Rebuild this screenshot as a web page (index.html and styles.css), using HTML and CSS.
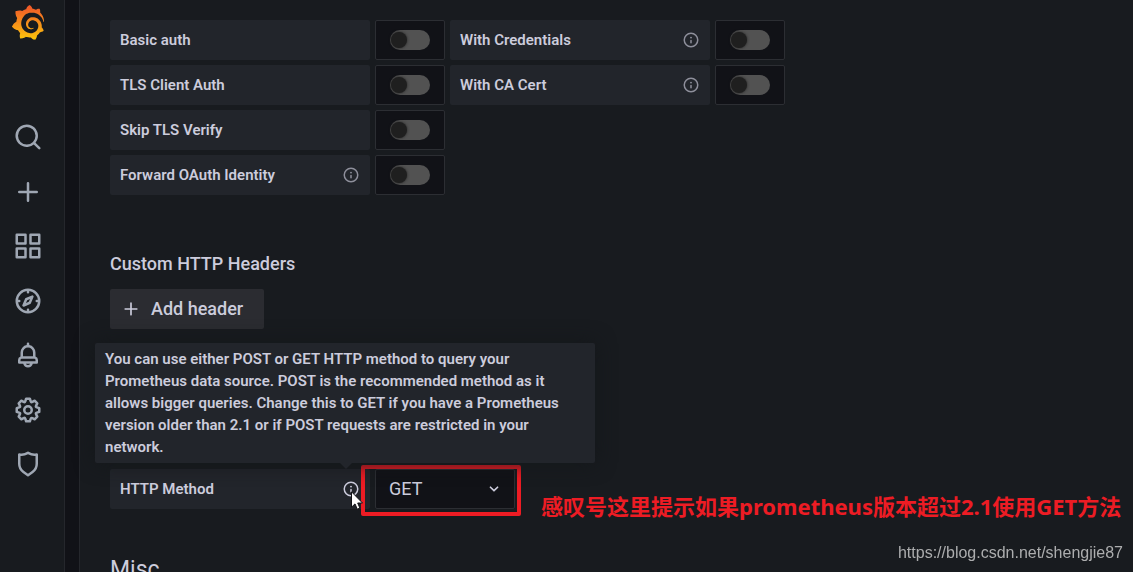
FILE: index.html
```html
<!DOCTYPE html>
<html lang="en">
<head>
<meta charset="utf-8">
<title>Prometheus data source settings</title>
<link rel="stylesheet" href="styles.css">
</head>
<body>
<svg class="defs" aria-hidden="true">
  <symbol id="info" viewBox="0 0 24 24"><path d="M12,2A10,10,0,1,0,22,12,10,10,0,0,0,12,2Zm0,18a8,8,0,1,1,8-8A8,8,0,0,1,12,20Zm0-8.5a1,1,0,0,0-1,1v3a1,1,0,0,0,2,0v-3A1,1,0,0,0,12,11.5Zm0-4a1.25,1.25,0,1,0,1.25,1.25A1.25,1.25,0,0,0,12,7.5Z"/></symbol>
  <symbol id="plus" viewBox="0 0 24 24"><path d="M19,11H13V5a1,1,0,0,0-2,0v6H5a1,1,0,0,0,0,2h6v6a1,1,0,0,0,2,0V13h6a1,1,0,0,0,0-2Z"/></symbol>
</svg>
<div class="app">
  <nav class="sidebar" aria-label="Main">
    <a class="logo" href="#" aria-label="Home">
      <svg viewBox="0 0 351 365"><defs><linearGradient id="flame" gradientUnits="userSpaceOnUse" x1="175" y1="365" x2="175" y2="20"><stop offset="0" stop-color="#fcc60b"/><stop offset="1" stop-color="#f05a28"/></linearGradient></defs>
      <path fill="url(#flame)" d="M342,161.2c-0.6-6.1-1.6-13.1-3.6-20.9c-2-7.7-5-16.2-9.4-25c-4.4-8.8-10.1-17.9-17.5-26.8c-2.9-3.5-6.1-6.9-9.5-10.2c5.1-20.3-6.2-37.9-6.2-37.9c-19.5-1.2-31.9,6.1-36.5,9.4c-0.8-0.3-1.5-0.7-2.3-1c-3.3-1.3-6.7-2.6-10.3-3.7c-3.5-1.1-7.1-2.1-10.8-3c-3.7-0.9-7.4-1.6-11.2-2.2c-0.7-0.1-1.3-0.2-2-0.3c-8.5-27.2-32.9-38.6-32.9-38.6c-27.3,17.3-32.4,41.5-32.4,41.5s-0.1,0.5-0.3,1.4c-1.5,0.4-3,0.9-4.5,1.3c-2.1,0.6-4.2,1.4-6.2,2.2c-2.1,0.8-4.1,1.6-6.2,2.5c-4.1,1.8-8.2,3.8-12.2,6c-3.9,2.2-7.7,4.6-11.4,7.1c-0.5-0.2-1-0.4-1-0.4c-37.8-14.4-71.3,2.9-71.3,2.9c-3.1,40.2,15.1,65.5,18.7,70.1c-0.9,2.5-1.7,5-2.5,7.5c-2.8,9.1-4.9,18.4-6.2,28.1c-0.2,1.4-0.4,2.8-0.5,4.2C18.8,192.7,8.5,228,8.5,228c29.1,33.5,63.1,35.6,63.1,35.6c0,0,0.1-0.1,0.1-0.1c4.3,7.7,9.3,15,14.9,21.9c2.4,2.9,4.8,5.6,7.4,8.3c-10.6,30.4,1.5,55.6,1.5,55.6c32.4,1.2,53.7-14.2,58.2-17.7c3.2,1.1,6.5,2.1,9.8,2.9c10,2.6,20.2,4.1,30.4,4.5c2.5,0.1,5.1,0.2,7.6,0.1l1.2,0l0.8,0l1.6,0l1.6-0.1l0,0.1c15.3,21.8,42.1,24.9,42.1,24.9c19.1-20.1,20.2-40.1,20.2-44.4l0,0c0,0,0-0.1,0-0.3c0-0.4,0-0.6,0-0.6l0,0c0-0.3,0-0.6,0-0.9c4-2.8,7.8-5.8,11.4-9.1c7.6-6.9,14.3-14.8,19.9-23.3c0.5-0.8,1-1.6,1.5-2.4c21.6,1.2,36.9-13.4,36.9-13.4c-3.6-22.5-16.4-33.5-19.1-35.6l0,0c0,0-0.1-0.1-0.3-0.2c-0.2-0.1-0.2-0.2-0.2-0.2c0,0,0,0,0,0c-0.1-0.1-0.3-0.2-0.5-0.3c0.1-1.4,0.2-2.7,0.3-4.1c0.2-2.4,0.2-4.9,0.2-7.3l0-1.8l0-0.9l0-0.5c0-0.6,0-0.4,0-0.6l-0.1-1.5l-0.1-2c0-0.7-0.1-1.3-0.2-1.9c-0.1-0.6-0.1-1.3-0.2-1.9l-0.2-1.9l-0.3-1.9c-0.4-2.5-0.8-4.9-1.4-7.4c-2.3-9.7-6.1-18.9-11-27.2c-5-8.3-11.2-15.6-18.3-21.8c-7-6.2-14.9-11.2-23.1-14.9c-8.3-3.7-16.9-6.1-25.5-7.2c-4.3-0.6-8.6-0.8-12.9-0.7l-1.6,0l-0.4,0c-0.1,0-0.6,0-0.5,0l-0.7,0l-1.6,0.1c-0.6,0-1.2,0.1-1.7,0.1c-2.2,0.2-4.4,0.5-6.5,0.9c-8.6,1.6-16.7,4.7-23.8,9c-7.1,4.3-13.3,9.6-18.3,15.6c-5,6-8.9,12.7-11.6,19.6c-2.7,6.9-4.2,14.1-4.6,21c-0.1,1.7-0.1,3.5-0.1,5.2c0,0.4,0,0.9,0,1.3l0.1,1.4c0.1,0.8,0.1,1.7,0.2,2.5c0.3,3.5,1,6.9,1.9,10.1c1.9,6.5,4.9,12.4,8.6,17.4c3.7,5,8.2,9.1,12.9,12.4c4.7,3.2,9.8,5.5,14.8,7c5,1.5,10,2.1,14.7,2.1c0.6,0,1.2,0,1.7,0c0.3,0,0.6,0,0.9,0c0.3,0,0.6,0,0.9-0.1c0.5,0,1-0.1,1.5-0.1c0.1,0,0.3,0,0.4-0.1l0.5-0.1c0.3,0,0.6-0.1,0.9-0.1c0.6-0.1,1.1-0.2,1.7-0.3c0.6-0.1,1.1-0.2,1.6-0.4c1.1-0.2,2.1-0.6,3.1-0.9c2-0.7,4-1.5,5.7-2.4c1.8-0.9,3.4-2,5-3c0.4-0.3,0.9-0.6,1.3-1c1.6-1.3,1.9-3.7,0.6-5.3c-1.1-1.4-3.1-1.8-4.7-0.9c-0.4,0.2-0.8,0.4-1.2,0.6c-1.4,0.7-2.8,1.3-4.3,1.8c-1.5,0.5-3.1,0.9-4.7,1.2c-0.8,0.1-1.6,0.2-2.5,0.3c-0.4,0-0.8,0.1-1.3,0.1c-0.4,0-0.9,0-1.2,0c-0.4,0-0.8,0-1.2,0c-0.5,0-1,0-1.5-0.1c-3.7-0.5-7.4-1.6-10.9-3.2c-3.6-1.6-7-3.8-10.1-6.6c-3.1-2.8-5.8-6.1-7.9-9.9c-2.1-3.8-3.6-8-4.3-12.4c-0.3-2.2-0.5-4.5-0.4-6.7c0-0.6,0.1-1.2,0.1-1.8c0.1-1.2,0.3-2.4,0.5-3.6c1.7-9.6,6.5-19,13.9-26.1c1.9-1.8,3.9-3.4,6-4.9c2.1-1.5,4.4-2.8,6.8-3.9c2.4-1.1,4.8-2,7.4-2.7c2.5-0.7,5.1-1.1,7.8-1.4c1.3-0.1,2.6-0.2,4-0.2l3.2,0l1.1,0.1c2.9,0.2,5.7,0.6,8.5,1.3c5.6,1.2,11.1,3.3,16.2,6.1c10.2,5.7,18.9,14.5,24.2,25.1c2.7,5.3,4.6,11,5.5,16.9c0.2,1.5,0.4,3,0.5,4.5l0.2,2.2l0,4.3c0,0.7-0.1,1.9-0.1,2.6c-0.1,1.6-0.3,3.3-0.5,4.9c-0.2,1.6-0.5,3.2-0.8,4.8c-0.3,1.6-0.7,3.2-1.1,4.7c-0.8,3.1-1.8,6.2-3,9.3c-2.4,6-5.6,11.8-9.4,17.1c-7.7,10.6-18.2,19.2-30.2,24.7c-6,2.7-12.3,4.7-18.8,5.7c-3.2,0.6-6.5,0.9-9.8,1l-5,0c-1.8,0-3.5-0.1-5.3-0.3c-7-0.5-13.9-1.8-20.7-3.7c-6.7-1.9-13.2-4.6-19.4-7.8c-12.3-6.6-23.4-15.6-32-26.5c-4.3-5.4-8.1-11.3-11.2-17.4c-3.1-6.1-5.6-12.6-7.4-19.1c-1.8-6.6-2.9-13.3-3.4-20.1l-0.1-1.3l0-8c0.1-3.3,0.4-6.8,0.8-10.2c0.4-3.4,1-6.9,1.7-10.3c0.7-3.4,1.5-6.8,2.5-10.2c1.9-6.7,4.3-13.2,7.1-19.3c5.7-12.2,13.1-23.1,22-31.8c2.2-2.2,4.5-4.2,6.9-6.2c2.4-1.9,4.9-3.7,7.5-5.4c2.5-1.7,5.2-3.2,7.9-4.6c1.3-0.7,2.7-1.4,4.1-2c1.4-0.6,2.8-1.2,4.2-1.8c2.8-1.2,5.7-2.2,8.7-3.1c1.5-0.4,3-0.9,4.4-1.3c1.5-0.4,3-0.8,4.5-1.1c1.5-0.3,3-0.7,4.6-1c0.8-0.1,1.5-0.3,2.3-0.4l2.3-0.4c1.6-0.2,3.3-0.4,4.9-0.6c1.4-0.2,2.8-0.4,4.2-0.5l1.7-0.1c1.3-0.1,2.6-0.2,3.9-0.3c4-0.2,8-0.2,12-0.1c5.8,0.2,11.5,0.9,17,1.9c11.1,2.1,21.5,5.6,31,10.3c9.5,4.6,17.9,10.3,25.3,16.5c3,2.5,5.8,5.2,8.5,7.9c3.1,3.3,6,6.6,8.6,10c5.2,6.7,9.4,13.5,12.7,19.9c1.6,3.1,3.1,6.3,4.4,9.4c1.2,3,2.4,5.9,3.3,8.6c1.5,4.4,2.6,8.3,3.5,11.7c0.3,1.4,1.6,2.3,3,2.1c1.5-0.1,2.6-1.3,2.6-2.8C342.6,170.4,342.5,166.1,342,161.2z"/></svg>
    </a>
    <div class="nav-items">
      <a href="#" aria-label="Search"><svg viewBox="0 0 24 24"><path d="M21.71,20.29,18,16.61A9,9,0,1,0,16.61,18l3.68,3.68a1,1,0,0,0,1.42,0A1,1,0,0,0,21.71,20.29ZM11,18a7,7,0,1,1,7-7A7,7,0,0,1,11,18Z"/></svg></a>
      <a href="#" aria-label="Create"><svg><use href="#plus"/></svg></a>
      <a href="#" aria-label="Dashboards"><svg viewBox="0 0 24 24"><path d="M10,13H3a1,1,0,0,0-1,1v7a1,1,0,0,0,1,1h7a1,1,0,0,0,1-1V14A1,1,0,0,0,10,13ZM9,20H4V15H9ZM21,2H14a1,1,0,0,0-1,1v7a1,1,0,0,0,1,1h7a1,1,0,0,0,1-1V3A1,1,0,0,0,21,2ZM20,9H15V4h5Zm1,4H14a1,1,0,0,0-1,1v7a1,1,0,0,0,1,1h7a1,1,0,0,0,1-1V14A1,1,0,0,0,21,13Zm-1,7H15V15h5ZM10,2H3A1,1,0,0,0,2,3v7a1,1,0,0,0,1,1h7a1,1,0,0,0,1-1V3A1,1,0,0,0,10,2ZM9,9H4V4H9Z"/></svg></a>
      <a href="#" aria-label="Explore"><svg viewBox="0 0 24 24"><path d="M12,2A10,10,0,1,0,22,12,10,10,0,0,0,12,2Zm1,17.93V19a1,1,0,0,0-2,0v.93A8,8,0,0,1,4.07,13H5a1,1,0,0,0,0-2H4.07A8,8,0,0,1,11,4.07V5a1,1,0,0,0,2,0V4.07A8,8,0,0,1,19.93,11H19a1,1,0,0,0,0,2h.93A8,8,0,0,1,13,19.93ZM15.14,7.55l-5,2.12a1,1,0,0,0-.52.52l-2.12,5a1,1,0,0,0,.21,1.1,1,1,0,0,0,.7.3.93.93,0,0,0,.4-.09l5-2.12a1,1,0,0,0,.52-.52l2.12-5a1,1,0,0,0-1.31-1.31Zm-2.49,5.1-2.28,1,1-2.28,2.28-1Z"/></svg></a>
      <a href="#" aria-label="Alerting"><svg viewBox="0 0 24 24"><path d="M18,13.18V10a6,6,0,0,0-5-5.91V3a1,1,0,0,0-2,0V4.09A6,6,0,0,0,6,10v3.18A3,3,0,0,0,4,16v2a1,1,0,0,0,1,1H8.14a4,4,0,0,0,7.72,0H19a1,1,0,0,0,1-1V16A3,3,0,0,0,18,13.18ZM8,10a4,4,0,0,1,8,0v3H8Zm4,10a2,2,0,0,1-1.72-1h3.44A2,2,0,0,1,12,20Zm6-3H6V16a1,1,0,0,1,1-1H17a1,1,0,0,1,1,1Z"/></svg></a>
      <a href="#" aria-label="Configuration"><svg viewBox="0 0 24 24"><path d="M21.32,9.55l-1.89-.63.89-1.78A1,1,0,0,0,20.13,6L18,3.87a1,1,0,0,0-1.15-.19l-1.78.89-.63-1.89A1,1,0,0,0,13.5,2h-3a1,1,0,0,0-.95.68L8.92,4.57,7.14,3.68A1,1,0,0,0,6,3.87L3.87,6a1,1,0,0,0-.19,1.15l.89,1.78-1.89.63A1,1,0,0,0,2,10.5v3a1,1,0,0,0,.68.95l1.89.63-.89,1.78A1,1,0,0,0,3.87,18L6,20.13a1,1,0,0,0,1.15.19l1.78-.89.63,1.89a1,1,0,0,0,.95.68h3a1,1,0,0,0,.95-.68l.63-1.89,1.78.89A1,1,0,0,0,18,20.13L20.13,18a1,1,0,0,0,.19-1.15l-.89-1.78,1.89-.63A1,1,0,0,0,22,13.5v-3A1,1,0,0,0,21.32,9.55ZM20,12.78l-1.2.4A2,2,0,0,0,17.64,16l.57,1.14-1.1,1.1L16,17.64a2,2,0,0,0-2.79,1.16l-.4,1.2H11.22l-.4-1.2A2,2,0,0,0,8,17.64l-1.14.57-1.1-1.1L6.36,16A2,2,0,0,0,5.2,13.18L4,12.78V11.22l1.2-.4A2,2,0,0,0,6.36,8L5.79,6.89l1.1-1.1L8,6.36A2,2,0,0,0,10.82,5.2l.4-1.2h1.56l.4,1.2A2,2,0,0,0,16,6.36l1.14-.57,1.1,1.1L17.64,8a2,2,0,0,0,1.16,2.79l1.2.4ZM12,8a4,4,0,1,0,4,4A4,4,0,0,0,12,8Zm0,6a2,2,0,1,1,2-2A2,2,0,0,1,12,14Z"/></svg></a>
      <a href="#" aria-label="Server admin"><svg viewBox="0 0 24 24"><path d="M19.63,3.65a1,1,0,0,0-.84-.2,8,8,0,0,1-6.22-1.27,1,1,0,0,0-1.14,0A8,8,0,0,1,5.21,3.45a1,1,0,0,0-.84.2A1,1,0,0,0,4,4.43v7.45a9,9,0,0,0,3.77,7.33l3.65,2.6a1,1,0,0,0,1.16,0l3.65-2.6A9,9,0,0,0,20,11.88V4.43A1,1,0,0,0,19.63,3.65ZM18,11.88a7,7,0,0,1-2.93,5.7L12,19.77,8.93,17.58A7,7,0,0,1,6,11.88V5.58a10,10,0,0,0,6-1.39,10,10,0,0,0,6,1.39Z"/></svg></a>
    </div>
  </nav>

  <main class="page">
    <section class="auth">
      <div class="row">
        <div class="field"><label class="label" for="basic">Basic auth</label><div class="switch-box"><input class="switch" type="checkbox" id="basic"></div></div>
        <div class="field"><label class="label" for="cred">With Credentials<svg class="info"><use href="#info"/></svg></label><div class="switch-box"><input class="switch" type="checkbox" id="cred"></div></div>
      </div>
      <div class="row">
        <div class="field"><label class="label" for="tls">TLS Client Auth</label><div class="switch-box"><input class="switch" type="checkbox" id="tls"></div></div>
        <div class="field"><label class="label" for="ca">With CA Cert<svg class="info"><use href="#info"/></svg></label><div class="switch-box"><input class="switch" type="checkbox" id="ca"></div></div>
      </div>
      <div class="row">
        <div class="field"><label class="label" for="skip">Skip TLS Verify</label><div class="switch-box"><input class="switch" type="checkbox" id="skip"></div></div>
      </div>
      <div class="row">
        <div class="field"><label class="label" for="oauth">Forward OAuth Identity<svg class="info"><use href="#info"/></svg></label><div class="switch-box"><input class="switch" type="checkbox" id="oauth"></div></div>
      </div>
    </section>

    <section class="headers">
      <h2 class="subtitle">Custom HTTP Headers</h2>
      <button class="button" type="button"><svg><use href="#plus"/></svg>Add header</button>
    </section>

    <section class="method">
      <div class="field">
        <label class="label" for="method">HTTP Method<svg class="info active"><use href="#info"/></svg></label>
        <div class="select-box">
          <select id="method" class="select"><option>GET</option><option>POST</option></select>
          <svg class="chevron" viewBox="0 0 24 24"><path d="M17,9.17a1,1,0,0,0-1.41,0L12,12.71,8.46,9.17a1,1,0,0,0-1.41,0,1,1,0,0,0,0,1.42l4.24,4.24a1,1,0,0,0,1.42,0L17,10.59A1,1,0,0,0,17,9.17Z"/></svg>
          <div class="highlight"></div>
        </div>
      </div>
      <div class="tooltip" role="tooltip">You can use either POST or GET HTTP method to query your Prometheus data source. POST is the recommended method as it allows bigger queries. Change this to GET if you have a Prometheus version older than 2.1 or if POST requests are restricted in your network.</div>
      <svg class="cursor" viewBox="0 0 12 19"><path d="M.5.8V16.2L4 12.9L6.3 18.2L8.9 17.1L6.7 12H11.5Z"/></svg>
      <p class="note" lang="zh">感叹号这里提示如果prometheus版本超过2.1使用GET方法</p>
    </section>

    <h1 class="title">Misc</h1>
  </main>
</div>
<p class="watermark">https://blog.csdn.net/shengjie87</p>
</body>
</html>
```

FILE: styles.css
```css
* { box-sizing: border-box; }

body {
  margin: 0;
  height: 100vh;
  overflow: hidden;
  background: #111217;
  color: #ccccdc;
  font-family: Roboto, "Liberation Sans", sans-serif;
  font-size: 15px;
  line-height: 22px;
}

h1, h2, p { margin: 0; font-weight: 500; }
svg { display: block; fill: currentColor; }
.defs { display: none; }

.app {
  display: flex;
  gap: 14px;
  min-height: 100vh;
}

.sidebar {
  flex: 0 0 65px;
  display: flex;
  flex-direction: column;
  gap: 82px;
  padding: 5px 8px 0 0;
  background: #181b1f;
  border-right: 1px solid #25272c;
}

.logo { align-self: center; }
.logo svg { width: 34px; height: 35px; }

.nav-items {
  display: flex;
  flex-direction: column;
  align-items: center;
  justify-content: space-between;
  height: 357px;
  color: #9fa7b3;
}
.nav-items a { color: inherit; }
.nav-items svg { width: 30px; height: 30px; }

.page {
  flex: 1;
  padding: 20px 30px 0;
  background: #181b1f;
  border-left: 1px solid #25272c;
}

.auth {
  display: flex;
  flex-direction: column;
  gap: 5px;
}
.row, .field { display: flex; gap: 5px; }

.label {
  display: flex;
  align-items: center;
  justify-content: space-between;
  width: 260px;
  height: 40px;
  padding: 0 10px;
  border-radius: 2px;
  background: #22252b;
  font-weight: 600;
}
.info { width: 18px; height: 18px; color: #8e8f9b; }
.info.active { color: #ccccdc; }

.switch-box {
  display: grid;
  place-items: center;
  width: 70px;
  height: 40px;
  border: 1px solid #2c2e33;
  border-radius: 2px;
  background: #111217;
}
.switch {
  appearance: none;
  display: flex;
  align-items: center;
  width: 40px;
  height: 20px;
  margin: 0;
  padding: 0 1px;
  border-radius: 10px;
  background: #525252;
}
.switch::before {
  content: "";
  width: 16px;
  height: 16px;
  border-radius: 50%;
  background: #1f1f1f;
  box-shadow: 0 0 3px #1f1f1f;
}

.headers { padding-top: 58px; }
.subtitle { font-size: 18px; }
.button {
  display: flex;
  align-items: center;
  gap: 10px;
  height: 40px;
  margin-top: 14px;
  padding: 0 21px 0 11px;
  border: 0;
  border-radius: 2px;
  background: #2b2c31;
  color: inherit;
  font: 500 18px/22px Roboto, "Liberation Sans", sans-serif;
}
.button svg { width: 20px; height: 20px; }

.method {
  position: relative;
  margin-top: 140px;
}
.select-box {
  position: relative;
  width: 140px;
  height: 40px;
}
.select {
  appearance: none;
  width: 100%;
  height: 100%;
  padding: 0 13px;
  border: 1px solid #2c2e33;
  border-radius: 2px;
  background: #111217;
  color: inherit;
  font: 400 18px/22px Roboto, "Liberation Sans", sans-serif;
}
.chevron {
  position: absolute;
  top: 10px;
  right: 11px;
  width: 20px;
  height: 20px;
}
.highlight {
  position: absolute;
  inset: -4px -6px -7px -14px;
  border: 4px solid #ed1c24;
  border-radius: 2px;
}

.tooltip {
  position: absolute;
  bottom: 46px;
  left: -15px;
  width: 500px;
  padding: 5px 10px;
  border-radius: 2px;
  background: #22252b;
  box-shadow: 0 0 20px #14171a;
  font-weight: 600;
}
.tooltip::after {
  content: "";
  position: absolute;
  top: 100%;
  left: 245px;
  border: 6px solid transparent;
  border-top-color: #22252b;
  border-bottom: 0;
}
.cursor {
  position: absolute;
  top: 22px;
  left: 241px;
  width: 12px;
  height: 19px;
  fill: #ffffff;
  stroke: #111217;
}
.note {
  position: absolute;
  top: 21px;
  left: 431px;
  color: #ed1c24;
  font: 700 22px/32px "Noto Sans", "Noto Sans CJK SC", sans-serif;
  white-space: nowrap;
}

.title {
  margin-top: 46px;
  font-size: 23px;
  font-weight: 400;
  line-height: 30px;
}

.watermark {
  position: fixed;
  right: 10px;
  bottom: 9px;
  color: #acadae;
  font: 400 16px/20px "Liberation Sans", sans-serif;
}
```
